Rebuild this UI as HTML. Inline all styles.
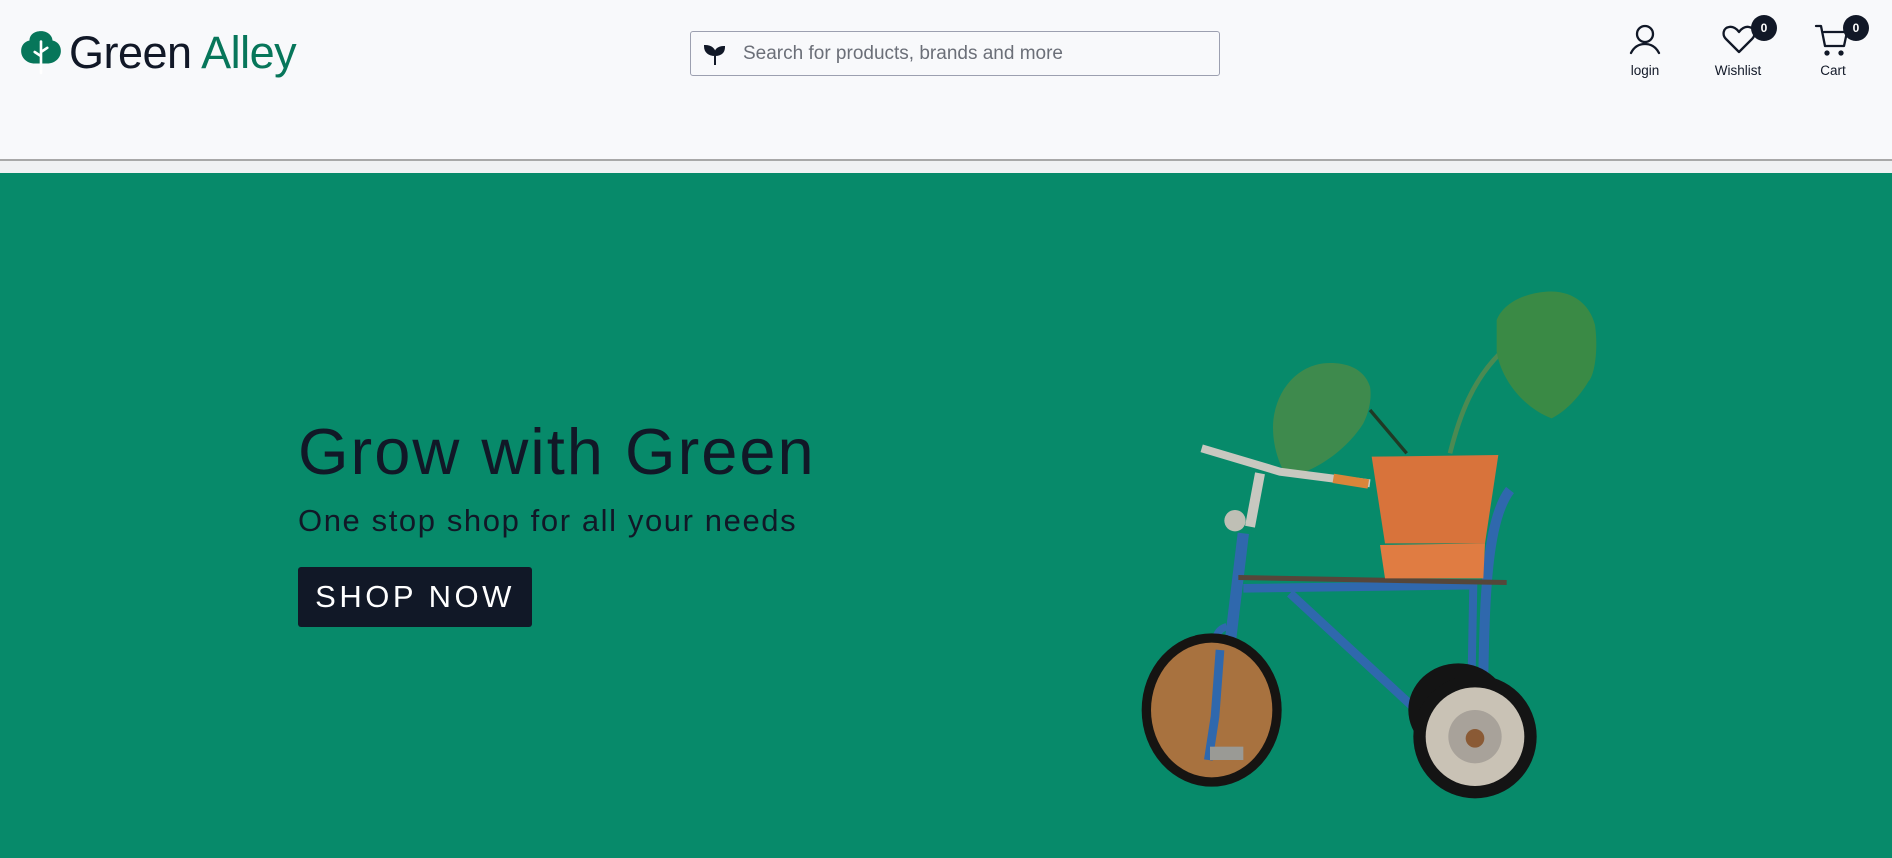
<!DOCTYPE html>
<html><head><meta charset="utf-8"><style>
*{margin:0;padding:0;box-sizing:border-box}
body{width:1892px;height:858px;overflow:hidden;background:#f0f1f3;font-family:"Liberation Sans",sans-serif;position:relative}
.hdr{position:absolute;left:0;top:0;width:1892px;height:161px;background:#f8f9fb;border-bottom:2px solid #a8a8a8}
.hero{position:absolute;left:0;top:173px;width:1892px;height:685px;background:#078a6a}
.logo{position:absolute;left:69px;top:27px;font-size:45px;color:#111827;letter-spacing:-0.5px}
.logo span{color:#07765a}
.search{position:absolute;left:690px;top:31px;width:530px;height:45px;border:1px solid #9ca0b0;border-radius:3px;background:#f8f9fb}
.search .t{position:absolute;left:52px;top:11px;font-size:19px;color:#6b6f78}
.ic{position:absolute;text-align:center;font-size:13.5px;color:#111827;width:80px}
.badge{position:absolute;width:26px;height:26px;border-radius:50%;background:#111827;color:#fff;font-size:12px;font-weight:bold;text-align:center;line-height:26px}
h1{position:absolute;left:298px;top:414px;font-size:65px;font-weight:normal;color:#111827;white-space:nowrap;letter-spacing:2px}
.sub{position:absolute;left:298px;top:503px;font-size:31px;color:#111827;white-space:nowrap;letter-spacing:1.6px}
.btn{position:absolute;left:298px;top:567px;width:234px;height:60px;background:#111827;border-radius:3px;color:#fff;font-size:31px;letter-spacing:3.5px;text-align:center;line-height:60px}
</style></head><body>
<div class="hdr">
<svg style="position:absolute;left:18px;top:29px" width="46" height="46" viewBox="0 0 44 44">
<path d="M22 2c7 0 11 5 11 9 5 1 8 5 8 10 0 7-6 12-13 12H16C9 33 3 28 3 21c0-5 3-9 8-10 0-5 4-9 11-9z" fill="#07765a"/>
<path d="M22 12v30M22 26l-6-4M22 22l6-4" stroke="#fff" stroke-width="2.5" stroke-linecap="round"/>
</svg>
<div class="logo">Green <span>Alley</span></div>
<div class="search">
<svg style="position:absolute;left:12px;top:11px" width="24" height="24" viewBox="0 0 24 24">
<path d="M12 22V12C12 6 8 3 2 3c0 6 4 9 10 9M12 12c0-5 3-8 9-8 0 5-3 8-9 8" fill="#111827" stroke="#111827" stroke-width="2"/>
</svg>
<div class="t">Search for products, brands and more</div>
</div>
<svg style="position:absolute;left:1628px;top:24px" width="34" height="32" viewBox="0 0 34 32" fill="none" stroke="#111827" stroke-width="2.3" stroke-linecap="round">
<circle cx="17" cy="10" r="8"/><path d="M3 29c3-6 8-9 14-9s11 3 14 9"/>
</svg>
<div class="ic" style="left:1605px;top:63px">login</div>
<svg style="position:absolute;left:1722px;top:24px" width="34" height="30" viewBox="0 0 34 30" fill="none" stroke="#111827" stroke-width="2.3" stroke-linejoin="round">
<path d="M17 28L4 15C0 11 1 4 7 3c4-1 8 2 10 5 2-3 6-6 10-5 6 1 7 8 3 12z"/>
</svg>
<div class="badge" style="left:1751px;top:15px">0</div>
<div class="ic" style="left:1698px;top:63px">Wishlist</div>
<svg style="position:absolute;left:1814px;top:24px" width="36" height="32" viewBox="0 0 36 32" fill="none" stroke="#111827" stroke-width="2.3" stroke-linecap="round" stroke-linejoin="round">
<path d="M2 2h5l4 20h19l3-14H10"/><circle cx="13" cy="29" r="1.5" fill="#111827"/><circle cx="27" cy="29" r="1.5" fill="#111827"/>
</svg>
<div class="badge" style="left:1843px;top:15px">0</div>
<div class="ic" style="left:1793px;top:63px">Cart</div>
</div>
<div class="hero"></div>
<h1>Grow with Green</h1>
<div class="sub">One stop shop for all your needs</div>
<div class="btn">SHOP NOW</div>
<svg style="position:absolute;left:1130px;top:280px" width="480" height="520" viewBox="0 0 1440 1560">
<path d="M720 390L830 520" stroke="#1f3a25" stroke-width="10"/>
<path d="M960 520C990 400 1030 300 1110 220" stroke="#4b8a52" stroke-width="14" fill="none"/>
<path d="M720 320C700 260 640 245 580 250 500 260 440 330 430 420c-5 60 10 120 40 170 80-10 180-80 230-160 20-40 25-80 20-110z" fill="#3e8a4d"/>
<path d="M1100 120c20-50 80-80 150-85 80-5 130 40 145 100 10 70 0 150-20 170-30 50-70 90-110 110-80-30-150-110-165-200z" fill="#3a8a45"/>
<path d="M215 505L450 575L720 610" stroke="#c8c8c0" stroke-width="24" fill="none"/>
<path d="M610 595L715 612" stroke="#d9853a" stroke-width="28"/>
<path d="M390 580L360 740" stroke="#c8c8c0" stroke-width="30"/>
<circle cx="315" cy="722" r="32" fill="#bfbfb5"/>
<path d="M340 760L275 1300" stroke="#2f68ad" stroke-width="34"/>
<path d="M290 1040C250 1050 250 1100 260 1150" stroke="#2f68ad" stroke-width="22" fill="none"/>
<path d="M480 940L870 1300" stroke="#2f68ad" stroke-width="26"/>
<path d="M340 925L1040 915" stroke="#2f68ad" stroke-width="26"/>
<path d="M1030 910L1025 1180" stroke="#2f68ad" stroke-width="24"/>
<path d="M1060 1180C1065 950 1070 720 1140 630" stroke="#2f68ad" stroke-width="30" fill="none"/>
<ellipse cx="985" cy="1290" rx="150" ry="140" fill="#141414"/>
<ellipse cx="245" cy="1290" rx="210" ry="230" fill="#161412"/>
<ellipse cx="245" cy="1290" rx="182" ry="202" fill="#a8723f"/>
<path d="M270 1110L255 1310L235 1440" stroke="#2f68ad" stroke-width="26"/>
<rect x="240" y="1400" width="100" height="40" fill="#9a9a95"/>
<circle cx="1035" cy="1370" r="185" fill="#141414"/>
<circle cx="1035" cy="1370" r="148" fill="#c9c2b5"/>
<circle cx="1035" cy="1370" r="80" fill="#a8a29a"/>
<circle cx="1035" cy="1375" r="28" fill="#8a5a35"/>
<path d="M325 885L1130 900L1130 915L325 900z" fill="#55463a"/>
<path d="M725 530L1105 525L1065 790L765 790z" fill="#d8733b"/>
<path d="M750 795L1065 790L1060 895L765 895z" fill="#e07c42"/>
</svg>
</body></html>
